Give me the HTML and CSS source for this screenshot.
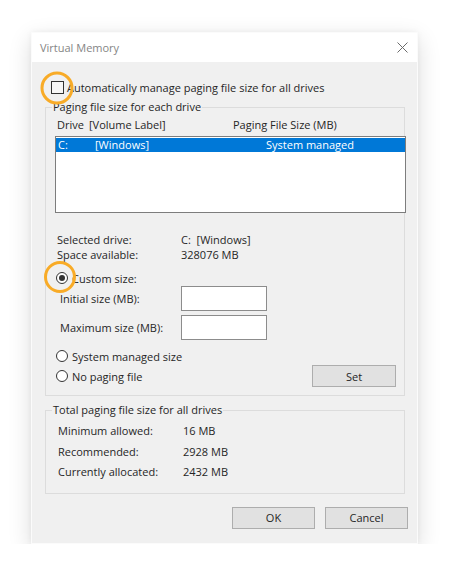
FILE: index.html
```html
<!DOCTYPE html>
<html>
<head>
<meta charset="utf-8">
<title>Virtual Memory</title>
<link rel="stylesheet" href="styles.css">
</head>
<body>
<div class="page">
  <div class="dialog">
    <div class="titlebar">
      <span class="title">Virtual Memory</span>
      <svg class="close" width="11" height="11" viewBox="0 0 11 11"><path d="M0.5 0.5L10.5 10.5M10.5 0.5L0.5 10.5" stroke="#6b6b6b" stroke-width="1" fill="none"/></svg>
    </div>
    <div class="body">
      <div class="check-row">
        <span class="checkbox mark mark-check"></span>
        <span>Automatically manage paging file size for all drives</span>
      </div>

      <fieldset class="group group-drive">
        <legend>Paging file size for each drive</legend>
        <div class="list-head">
          <span class="col-drive">Drive</span><span class="col-label">[Volume Label]</span><span class="col-size">Paging File Size (MB)</span>
        </div>
        <div class="listbox">
          <div class="list-row selected">
            <span class="cell-drive">C:</span><span class="cell-label">[Windows]</span><span class="cell-size">System managed</span>
          </div>
        </div>

        <div class="info">
          <div class="info-row"><span class="info-key">Selected drive:</span><span>C:&nbsp;&nbsp;[Windows]</span></div>
          <div class="info-row"><span class="info-key">Space available:</span><span>328076 MB</span></div>
        </div>

        <div class="radio-row radio-custom">
          <span class="radio checked mark mark-radio"></span>
          <span>Custom size:</span>
        </div>
        <div class="field-row field-initial">
          <span class="field-label">Initial size (MB):</span>
          <span class="textbox"></span>
        </div>
        <div class="field-row field-max">
          <span class="field-label">Maximum size (MB):</span>
          <span class="textbox"></span>
        </div>
        <div class="radio-row radio-system">
          <span class="radio"></span>
          <span>System managed size</span>
        </div>
        <div class="radio-row radio-none">
          <span class="radio"></span>
          <span>No paging file</span>
          <span class="button btn-set">Set</span>
        </div>
      </fieldset>

      <fieldset class="group group-total">
        <legend>Total paging file size for all drives</legend>
        <div class="total-row"><span class="total-key">Minimum allowed:</span><span>16 MB</span></div>
        <div class="total-row"><span class="total-key">Recommended:</span><span>2928 MB</span></div>
        <div class="total-row"><span class="total-key">Currently allocated:</span><span>2432 MB</span></div>
      </fieldset>

      <div class="actions">
        <span class="button btn-action">OK</span>
        <span class="button btn-action">Cancel</span>
      </div>
    </div>
  </div>
</div>
</body>
</html>
```

FILE: styles.css
```css
html, body {
  margin: 0;
  padding: 0;
  background: #ffffff;
}

body {
  font-family: "Open Sans", "Noto Sans", "Liberation Sans", sans-serif;
  font-size: 11px;
  color: #262626;
}

.page {
  padding: 32px 0 0 31px;
}

.dialog {
  box-sizing: border-box;
  width: 387px;
  height: 512px;
  background: #f0f0f0;
  border: 1px solid #fbfbfb;
  box-shadow: 0 7px 22px rgba(0, 0, 0, 0.14), 0 0 6px rgba(0, 0, 0, 0.05);
}

.titlebar {
  height: 29px;
  background: #ffffff;
  display: flex;
  align-items: center;
  justify-content: space-between;
  padding: 0 9px 0 8px;
}

.title {
  color: #858585;
  font-size: 11px;
}

.close {
  display: block;
}

.body {
  padding: 17px 0 0 13px;
}

.check-row {
  display: flex;
  align-items: center;
  height: 16px;
  padding-left: 6px;
  gap: 3px;
}

.checkbox {
  box-sizing: border-box;
  width: 13px;
  height: 13px;
  border: 1px solid #333333;
  background: #f7f7f7;
  flex: none;
}

.mark {
  position: relative;
}

.mark::after {
  content: "";
  position: absolute;
  box-sizing: border-box;
  border: 3px solid #f8ab27;
  border-radius: 50%;
  transform: translate(-50%, -50%);
}

.mark-check::after {
  width: 33px;
  height: 33px;
  left: calc(50% - 1px);
  top: calc(50% + 1px);
}

.mark-radio::after {
  width: 32px;
  height: 32px;
  left: calc(50% - 2px);
  top: calc(50% - 1px);
}

.group {
  box-sizing: border-box;
  width: 360px;
  margin: 0;
  padding: 0;
  border: 1px solid #dcdcdc;
  min-width: 0;
}

.group legend {
  margin-left: 6px;
  padding: 0 1px;
  line-height: 16px;
}

.group-drive {
  margin-top: 4px;
  padding-bottom: 8px;
}

.list-head {
  display: flex;
  margin-top: 2px;
  line-height: 16px;
  padding-left: 11px;
}

.col-drive {
  width: 32px;
}

.col-label {
  width: 144px;
}

.listbox {
  box-sizing: border-box;
  width: 351px;
  height: 77px;
  margin: 3px 0 0 9px;
  border: 1px solid #7d7d7d;
  background: #ffffff;
  padding: 1px 0 0 0;
}

.list-row {
  display: flex;
  height: 14px;
  line-height: 14px;
  padding-left: 2px;
}

.list-row.selected {
  background: #0078d7;
  color: #ffffff;
}

.cell-drive {
  width: 37px;
}

.cell-label {
  width: 171px;
}

.info {
  margin-top: 19px;
  padding-left: 11px;
}

.info-row {
  display: flex;
  line-height: 15px;
}

.info-key {
  width: 124px;
}

.radio-row {
  display: flex;
  align-items: center;
  padding-left: 10px;
  gap: 4px;
}

.radio {
  box-sizing: border-box;
  width: 12px;
  height: 12px;
  border: 1px solid #333333;
  border-radius: 50%;
  background: #ffffff;
  flex: none;
  display: flex;
  align-items: center;
  justify-content: center;
}

.radio.checked::before {
  content: "";
  width: 6px;
  height: 6px;
  border-radius: 50%;
  background: #333333;
}

.radio-custom {
  height: 16px;
  margin-top: 8px;
}

.field-row {
  display: flex;
  align-items: center;
  padding-left: 14px;
}

.field-initial {
  margin-top: 0;
}

.field-max {
  margin-top: 4px;
}

.field-label {
  width: 121px;
}

.textbox {
  box-sizing: border-box;
  width: 86px;
  height: 25px;
  background: #ffffff;
  border: 1px solid #8c8c8c;
}

.radio-system {
  height: 16px;
  margin-top: 8px;
}

.radio-none {
  height: 22px;
  margin-top: 1px;
  padding-right: 8px;
}

.button {
  box-sizing: border-box;
  display: flex;
  align-items: center;
  justify-content: center;
  height: 22px;
  background: #e1e1e1;
  border: 1px solid #adadad;
  color: #262626;
}

.btn-set {
  width: 84px;
  margin-left: auto;
}

.group-total {
  margin-top: 6px;
  padding: 3px 0 10px 0;
}

.total-row {
  display: flex;
  line-height: 20.5px;
  padding-left: 12px;
}

.total-key {
  width: 125px;
}

.actions {
  display: flex;
  justify-content: flex-end;
  gap: 10px;
  margin-top: 13px;
  padding-right: 9px;
}

.btn-action {
  width: 83px;
}
```
